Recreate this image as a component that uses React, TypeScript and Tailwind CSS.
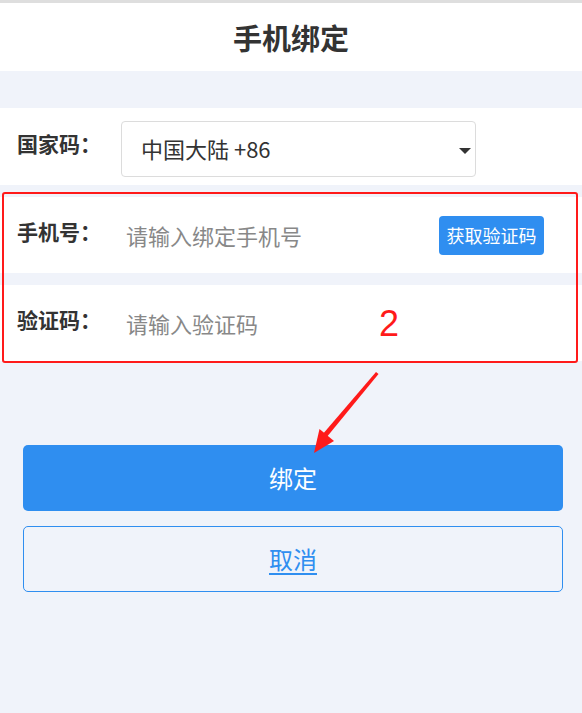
import React from 'react';

const font = { fontFamily: '"Noto Sans CJK SC", "Noto Sans", sans-serif' };

const App = () => {
  return (
    <div className="relative min-h-[713px] w-full bg-[#f0f3fa] text-[#333]" style={font}>
      {/* Header */}
      <div className="flex h-[71px] items-center justify-center border-t-[3px] border-[#dedede] bg-white">
        <h1 className="text-[29px] font-bold leading-none text-[#333]">手机绑定</h1>
      </div>

      <div className="h-[37px]" />

      {/* Country code */}
      <div className="flex h-[77px] items-center bg-white pl-[17px]">
        <span className="-mt-[6px] w-[104px] text-[21px] font-bold">国家码：</span>
        <div className="relative mt-[4px]">
          <select className="h-[56px] w-[355px] appearance-none rounded-[4px] border border-[#dcdcdc] bg-white pl-[19px] text-[22px] text-[#333] outline-none">
            <option>中国大陆 +86</option>
          </select>
          <span className="pointer-events-none absolute right-[5px] top-[27px] h-0 w-0 border-x-[6px] border-t-[6px] border-x-transparent border-t-[#333]" />
        </div>
      </div>

      {/* Phone + code, annotated */}
      <div className="relative pt-[12px]">
        <div className="flex h-[76px] items-center bg-white pl-[17px] pr-[38px]">
          <span className="-mt-[6px] w-[109px] shrink-0 text-[21px] font-bold">手机号：</span>
          <input
            className="min-w-0 flex-1 bg-transparent text-[22px] outline-none placeholder:text-[#888]"
            placeholder="请输入绑定手机号"
          />
          <button className="h-[39px] w-[105px] shrink-0 rounded-[4px] bg-[#2f8ef0] text-[18px] text-white">
            获取验证码
          </button>
        </div>
        <div className="h-[12px]" />
        <div className="flex h-[76px] items-center bg-white pl-[17px] pr-[38px]">
          <span className="-mt-[6px] w-[109px] shrink-0 text-[21px] font-bold">验证码：</span>
          <input
            className="min-w-0 flex-1 bg-transparent text-[22px] outline-none placeholder:text-[#888]"
            placeholder="请输入验证码"
          />
        </div>

        {/* annotation */}
        <div className="pointer-events-none absolute left-[2px] right-[4px] top-[7px] h-[171px] rounded-[3px] border-2 border-[#ff1a1a]" />
        <span
          className="absolute left-[379px] top-[121px] text-[36px] leading-none text-[#ff1a1a]"
          style={{ fontFamily: '"Liberation Sans", Arial, sans-serif' }}
        >
          2
        </span>
      </div>

      {/* Buttons */}
      <div className="flex flex-col gap-[15px] pl-[23px] pr-[19px] pt-[84px]">
        <button className="h-[66px] w-full rounded-[5px] bg-[#2f8ef0] text-[24px] text-white">绑定</button>
        <button className="h-[66px] w-full rounded-[5px] border border-[#2f8ef0] text-[24px] text-[#2f8ef0]">
          <span className="underline underline-offset-[4px]">取消</span>
        </button>
      </div>

      {/* arrow */}
      <svg className="pointer-events-none absolute left-0 top-0" width="582" height="713">
        <polygon points="376,372 378.5,374 326,438 322,435" fill="#ff1a1a" />
        <polygon points="314,453 319.5,429 334,441" fill="#ff1a1a" />
      </svg>
    </div>
  );
};

export default App;
